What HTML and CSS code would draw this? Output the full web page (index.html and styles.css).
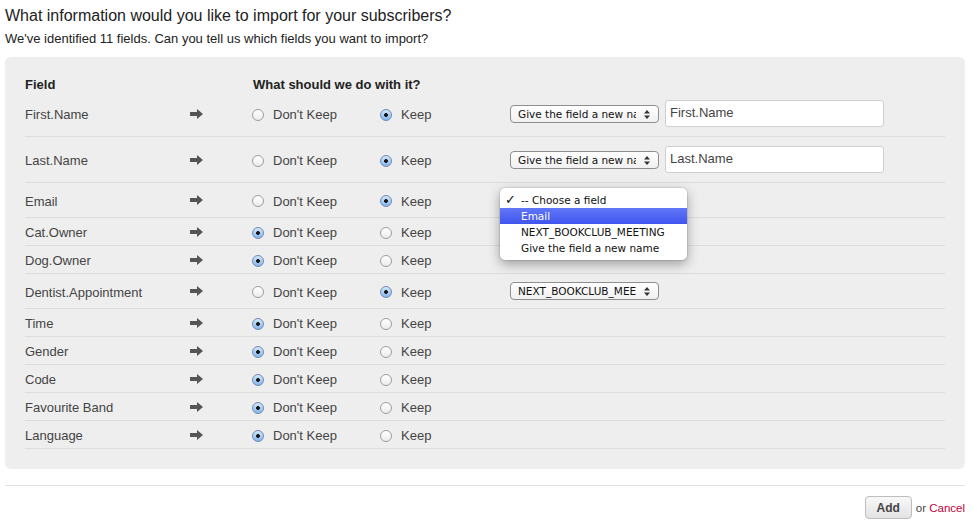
FILE: index.html
```html
<!DOCTYPE html>
<html lang="en">
<head>
  <meta charset="UTF-8">
  <title>Import subscribers</title>
  <link rel="stylesheet" href="styles.css">
</head>
<body>

  <div class="page">
    <h1>What information would you like to import for your subscribers?</h1>
    <p class="intro">We've identified 11 fields. Can you tell us which fields you want to import?</p>

    <div class="panel">
      <div class="row head">
        <div>Field</div>
        <div></div>
        <div class="span">What should we do with it?</div>
      </div>

      <div class="row tall">
        <div>First.Name</div>
        <div class="arrow"><svg width="13" height="10" viewBox="0 0 13 10"><path d="M0 3h7V0l6 5-6 5V7H0z" fill="#555"/></svg></div>
        <label><input type="radio" name="f1"> Don't Keep</label>
        <label><input type="radio" name="f1" checked> Keep</label>
        <div class="action">
          <span class="picker"><select><option>Give the field a new name</option></select><svg class="updown" width="6" height="9" viewBox="0 0 6 9"><path d="M0 3.5L3 0l3 3.5zM0 5.5L3 9l3-3.5z" fill="#333"/></svg></span>
          <input type="text" class="rename" value="First.Name">
        </div>
      </div>

      <div class="row tall">
        <div>Last.Name</div>
        <div class="arrow"><svg width="13" height="10" viewBox="0 0 13 10"><path d="M0 3h7V0l6 5-6 5V7H0z" fill="#555"/></svg></div>
        <label><input type="radio" name="f2"> Don't Keep</label>
        <label><input type="radio" name="f2" checked> Keep</label>
        <div class="action">
          <span class="picker"><select><option>Give the field a new name</option></select><svg class="updown" width="6" height="9" viewBox="0 0 6 9"><path d="M0 3.5L3 0l3 3.5zM0 5.5L3 9l3-3.5z" fill="#333"/></svg></span>
          <input type="text" class="rename" value="Last.Name">
        </div>
      </div>

      <div class="row mid">
        <div>Email</div>
        <div class="arrow"><svg width="13" height="10" viewBox="0 0 13 10"><path d="M0 3h7V0l6 5-6 5V7H0z" fill="#555"/></svg></div>
        <label><input type="radio" name="f3"> Don't Keep</label>
        <label><input type="radio" name="f3" checked> Keep</label>
        <div class="action">
          <span class="picker"><select><option>-- Choose a field</option></select><svg class="updown" width="6" height="9" viewBox="0 0 6 9"><path d="M0 3.5L3 0l3 3.5zM0 5.5L3 9l3-3.5z" fill="#333"/></svg></span>
          <!-- open dropdown of the select -->
          <ul class="menu">
            <li><span class="tick">✓</span>-- Choose a field</li>
            <li class="active">Email</li>
            <li>NEXT_BOOKCLUB_MEETING</li>
            <li>Give the field a new name</li>
          </ul>
        </div>
      </div>

      <div class="row">
        <div>Cat.Owner</div>
        <div class="arrow"><svg width="13" height="10" viewBox="0 0 13 10"><path d="M0 3h7V0l6 5-6 5V7H0z" fill="#555"/></svg></div>
        <label><input type="radio" name="f4" checked> Don't Keep</label>
        <label><input type="radio" name="f4"> Keep</label>
        <div></div>
      </div>

      <div class="row">
        <div>Dog.Owner</div>
        <div class="arrow"><svg width="13" height="10" viewBox="0 0 13 10"><path d="M0 3h7V0l6 5-6 5V7H0z" fill="#555"/></svg></div>
        <label><input type="radio" name="f5" checked> Don't Keep</label>
        <label><input type="radio" name="f5"> Keep</label>
        <div></div>
      </div>

      <div class="row mid">
        <div>Dentist.Appointment</div>
        <div class="arrow"><svg width="13" height="10" viewBox="0 0 13 10"><path d="M0 3h7V0l6 5-6 5V7H0z" fill="#555"/></svg></div>
        <label><input type="radio" name="f6"> Don't Keep</label>
        <label><input type="radio" name="f6" checked> Keep</label>
        <div class="action">
          <span class="picker"><select><option>NEXT_BOOKCLUB_MEETING</option></select><svg class="updown" width="6" height="9" viewBox="0 0 6 9"><path d="M0 3.5L3 0l3 3.5zM0 5.5L3 9l3-3.5z" fill="#333"/></svg></span>
        </div>
      </div>

      <div class="row">
        <div>Time</div>
        <div class="arrow"><svg width="13" height="10" viewBox="0 0 13 10"><path d="M0 3h7V0l6 5-6 5V7H0z" fill="#555"/></svg></div>
        <label><input type="radio" name="f7" checked> Don't Keep</label>
        <label><input type="radio" name="f7"> Keep</label>
        <div></div>
      </div>

      <div class="row">
        <div>Gender</div>
        <div class="arrow"><svg width="13" height="10" viewBox="0 0 13 10"><path d="M0 3h7V0l6 5-6 5V7H0z" fill="#555"/></svg></div>
        <label><input type="radio" name="f8" checked> Don't Keep</label>
        <label><input type="radio" name="f8"> Keep</label>
        <div></div>
      </div>

      <div class="row">
        <div>Code</div>
        <div class="arrow"><svg width="13" height="10" viewBox="0 0 13 10"><path d="M0 3h7V0l6 5-6 5V7H0z" fill="#555"/></svg></div>
        <label><input type="radio" name="f9" checked> Don't Keep</label>
        <label><input type="radio" name="f9"> Keep</label>
        <div></div>
      </div>

      <div class="row">
        <div>Favourite Band</div>
        <div class="arrow"><svg width="13" height="10" viewBox="0 0 13 10"><path d="M0 3h7V0l6 5-6 5V7H0z" fill="#555"/></svg></div>
        <label><input type="radio" name="f10" checked> Don't Keep</label>
        <label><input type="radio" name="f10"> Keep</label>
        <div></div>
      </div>

      <div class="row">
        <div>Language</div>
        <div class="arrow"><svg width="13" height="10" viewBox="0 0 13 10"><path d="M0 3h7V0l6 5-6 5V7H0z" fill="#555"/></svg></div>
        <label><input type="radio" name="f11" checked> Don't Keep</label>
        <label><input type="radio" name="f11"> Keep</label>
        <div></div>
      </div>
    </div>

    <div class="footer">
      <button type="button" class="btn">Add</button>
      <span class="or">or <a href="#">Cancel</a></span>
    </div>
  </div>

</body>
</html>
```

FILE: styles.css
```css
body {
  margin: 0;
  font-family: 'Liberation Sans', Arial, sans-serif;
  color: #333;
  background: #fff;
}

.page {
  width: 960px;
  margin-left: 5px;
}

h1 {
  font-size: 16px;
  font-weight: normal;
  color: #222;
  line-height: 20px;
  margin: 6px 0 0;
}

.intro {
  font-size: 13px;
  color: #222;
  line-height: 16px;
  margin: 5px 0 0;
}

.panel {
  margin-top: 10px;
  background-color: #eeeeee;
  border-radius: 6px;
  padding: 21px 20px 20px 20px;
}

.row {
  display: grid;
  grid-template-columns: 165px 62px 128px 130px 1fr;
  align-items: center;
  height: 28px;
  padding-top: 2px;
  box-sizing: border-box;
  border-bottom: 1px solid #dcdcdc;
  font-size: 13px;
  color: #444;
}

.row.tall {
  height: 46px;
}

.row.mid {
  height: 35px;
}

.row.head {
  height: 13px;
  padding-top: 0;
  border-bottom: none;
  font-weight: bold;
  color: #222;
  line-height: 14px;
}

.row.head .span {
  grid-column: 3 / 6;
  padding-left: 1px;
}

.arrow svg {
  display: block;
  margin-top: -2px;
}

.row label {
  display: flex;
  align-items: center;
}

input[type="radio"] {
  appearance: none;
  -webkit-appearance: none;
  width: 12px;
  height: 12px;
  margin: 0 9px 0 0;
  border-radius: 50%;
  border: 1px solid #9d9d9d;
  background: linear-gradient(#ffffff, #ececec);
  box-sizing: border-box;
}

input[type="radio"]:checked {
  border-color: #6f8bb3;
  background: radial-gradient(circle, #1a1a1a 0 1.6px, transparent 2.2px), linear-gradient(#d3e6fb, #84b6ee);
}

.action {
  position: relative;
  display: flex;
  align-items: center;
  margin-top: -2px;
}

.picker {
  position: relative;
  display: inline-block;
}

.picker select {
  appearance: none;
  -webkit-appearance: none;
  width: 149px;
  height: 18px;
  line-height: 16px;
  padding: 0 22px 0 7px;
  font-family: 'DejaVu Sans', Verdana, sans-serif;
  font-size: 10.5px;
  color: #111;
  border: 1px solid #8e8e8e;
  border-radius: 4px;
  background: linear-gradient(#ffffff, #f0f0f0);
  display: block;
}

.picker .updown {
  position: absolute;
  right: 9px;
  top: 5px;
}

.rename {
  margin-left: 6px;
  width: 219px;
  height: 27px;
  box-sizing: border-box;
  border: 1px solid #cfcfcf;
  border-radius: 3px;
  padding: 0 4px 3px;
  font-family: 'Liberation Sans', Arial, sans-serif;
  font-size: 13px;
  color: #444;
  background: #fff;
}

.menu {
  position: absolute;
  left: -10px;
  top: -3px;
  width: 187px;
  margin: 0;
  padding: 4px 0;
  list-style: none;
  background: #fff;
  border-radius: 5px;
  box-shadow: 0 4px 12px rgba(0, 0, 0, 0.35), 0 0 0 1px rgba(0, 0, 0, 0.08);
  font-family: 'DejaVu Sans', Verdana, sans-serif;
  font-size: 10.5px;
  color: #111;
  z-index: 5;
}

.menu li {
  position: relative;
  height: 16px;
  line-height: 16px;
  padding-left: 21px;
}

.menu li.active {
  background: linear-gradient(#6176f7, #3f55ef);
  color: #fff;
}

.menu .tick {
  position: absolute;
  left: 5px;
  font-size: 13px;
  font-weight: bold;
}

.footer {
  margin-top: 16px;
  border-top: 1px solid #e2e2e2;
  padding-top: 10px;
  display: flex;
  justify-content: flex-end;
  align-items: center;
}

.btn {
  width: 47px;
  height: 23px;
  border: 1px solid #bdbdbd;
  border-radius: 4px;
  background: linear-gradient(#f8f8f8, #e3e3e3);
  font-family: 'Liberation Sans', Arial, sans-serif;
  font-size: 12px;
  font-weight: bold;
  color: #444;
  padding: 0;
}

.or {
  margin-left: 4px;
  font-size: 11.5px;
  color: #444;
}

.or a {
  color: #c3003c;
  text-decoration: none;
}
```
